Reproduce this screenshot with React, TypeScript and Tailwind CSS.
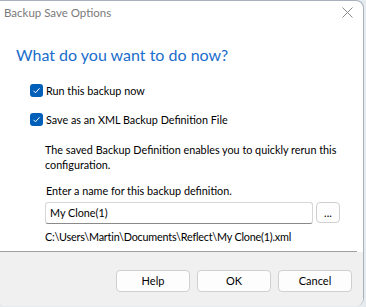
import React from "react";

function Check() {
  return (
    <div className="w-[13px] h-[13px] rounded-[3px] bg-[#005fb8] flex items-center justify-center shrink-0">
      <svg width="9" height="9" viewBox="0 0 9 9">
        <path d="M1.5 4.8 L3.5 6.8 L7.5 2.3" fill="none" stroke="white" strokeWidth="1" />
      </svg>
    </div>
  );
}

function Btn({ label }: { label: string }) {
  return (
    <div className="w-[74px] h-[22px] rounded-[4px] border border-[#d0d0d0] bg-[#fdfdfd] flex items-center justify-center text-[11px] text-black">
      {label}
    </div>
  );
}

export default function App() {
  return (
    <div
      className="w-[366px] h-[307px] bg-[#e6ebf0] overflow-hidden"
      style={{ fontFamily: "Lato, 'Liberation Sans', sans-serif" }}
    >
      <div className="w-[364px] h-[306px] bg-white border-t border-r border-[#a9b2bc] rounded-tr-[8px] rounded-br-[8px] rounded-bl-[6px] overflow-hidden flex flex-col">
        <div className="h-[23px] flex items-center justify-between pl-[4px] pr-[8px]">
          <span className="text-[11.5px] text-[#7a7a7a]">Backup Save Options</span>
          <svg width="11" height="11" viewBox="0 0 11 11" className="mr-[2px]">
            <path d="M0.5 0.5 L10.5 10.5 M10.5 0.5 L0.5 10.5" stroke="#888" strokeWidth="1" />
          </svg>
        </div>
        <div className="pl-[16px] pt-[21px] text-[16px] leading-[20px] text-[#1a6dcc]">
          What do you want to do now?
        </div>
        <div className="pl-[30px] pt-[18px] flex items-center gap-[3px] text-[10.8px] leading-[15px] text-black">
          <Check />
          <span>Run this backup now</span>
        </div>
        <div className="pl-[30px] pt-[14px] flex items-center gap-[3px] text-[10.8px] leading-[15px] text-black">
          <Check />
          <span>Save as an XML Backup Definition File</span>
        </div>
        <div className="pl-[45px] pt-[15px] text-[10.8px] leading-[15px] text-black whitespace-nowrap">
          The saved Backup Definition enables you to quickly rerun this
          <br />
          configuration.
        </div>
        <div className="pl-[46px] pt-[11px] text-[10.8px] leading-[15px] text-black">
          Enter a name for this backup definition.
        </div>
        <div className="pl-[45px] pt-[4px] flex gap-[3px]">
          <div className="w-[268px] h-[22px] border border-[#d6d6d6] border-b-[#8a8a8a] rounded-[3px] bg-white flex items-center pl-[4px] text-[10.8px] text-black">
            My Clone(1)
          </div>
          <div className="w-[24px] h-[21px] border border-[#d0d0d0] rounded-[4px] bg-[#fdfdfd] flex items-end justify-center pb-[3px] text-[11px] leading-[12px] text-black">
            ...
          </div>
        </div>
        <div className="pl-[45px] pt-[5px] text-[10.8px] leading-[15px] text-black tracking-[-0.2px]">
          C:\Users\Martin\Documents\Reflect\My Clone(1).xml
        </div>
        <div className="mt-[7px] w-[357px] h-px bg-[#a0a0a0] shrink-0" />
        <div className="flex-1 bg-[#f0f0f0] flex justify-end gap-[7px] pt-[18px] pr-[11px]">
          <Btn label="Help" />
          <Btn label="OK" />
          <Btn label="Cancel" />
        </div>
      </div>
    </div>
  );
}
